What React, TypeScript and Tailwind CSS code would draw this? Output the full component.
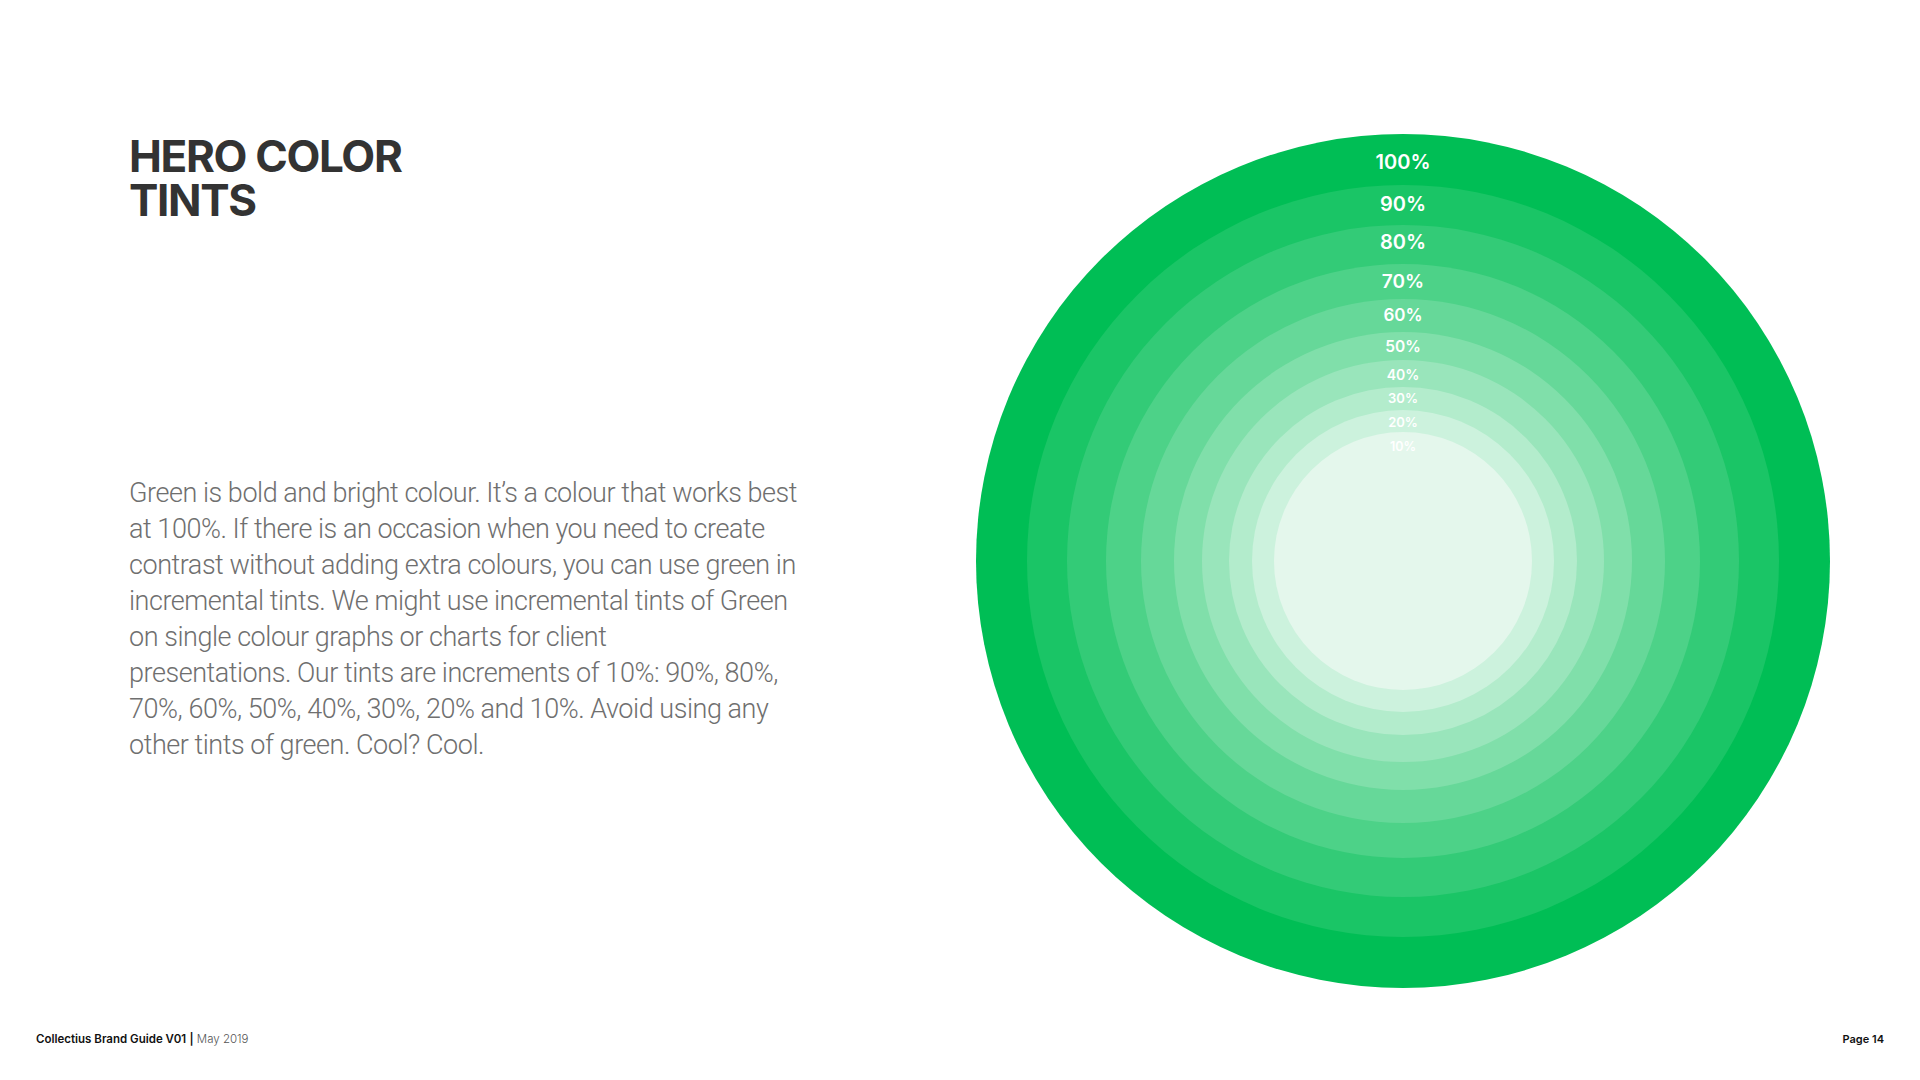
const tints = [
  { label: "100%", r: 427, fill: "#00BE55", y: 28, size: 20 },
  { label: "90%", r: 376, fill: "#1AC566", y: 70, size: 20 },
  { label: "80%", r: 336, fill: "#33CB77", y: 108, size: 20 },
  { label: "70%", r: 297, fill: "#4DD288", y: 147, size: 19 },
  { label: "60%", r: 262, fill: "#66D899", y: 181, size: 17 },
  { label: "50%", r: 229, fill: "#80DFAA", y: 212, size: 15.5 },
  { label: "40%", r: 201, fill: "#99E5BB", y: 240, size: 14 },
  { label: "30%", r: 174, fill: "#B3ECCC", y: 264, size: 13 },
  { label: "20%", r: 151, fill: "#CCF2DD", y: 288, size: 13 },
  { label: "10%", r: 129, fill: "#E4F7EC", y: 312, size: 12.5 },
];

function TintChart() {
  return (
    <svg width="854" height="854" viewBox="0 0 854 854" className="shrink-0">
      {tints.map((t) => (
        <circle key={t.label} cx="427" cy="427" r={t.r} fill={t.fill} />
      ))}
      {tints.map((t) => (
        <text
          key={t.label + "-t"}
          x="427"
          y={t.y}
          textAnchor="middle"
          dominantBaseline="central"
          fill="#ffffff"
          fontFamily="Inter, sans-serif"
          fontWeight={600}
          fontSize={t.size}
        >
          {t.label}
        </text>
      ))}
    </svg>
  );
}

export default function App() {
  return (
    <main className="w-[1920px] h-[1080px] bg-white flex flex-col overflow-hidden font-['Inter',sans-serif]">
      <section className="flex-1 flex pt-[134px]">
        {/* Left: title and copy */}
        <div className="pl-[129px] flex-1">
          <h1 className="text-[44px] leading-[44px] font-bold tracking-[-0.03em] text-[#333333]">
            <span className="block">HERO COLOR</span>
            <span className="block">TINTS</span>
          </h1>
          <p className="mt-[253px] font-['Roboto',sans-serif] font-light text-[27px] leading-[36px] text-[#6f6f6f] tracking-[-0.017em] whitespace-nowrap">
            Green is bold and bright colour. It’s a colour that works best
            <br />
            at 100%. If there is an occasion when you need to create
            <br />
            contrast without adding extra colours, you can use green in
            <br />
            incremental tints. We might use incremental tints of Green
            <br />
            on single colour graphs or charts for client
            <br />
            presentations. Our tints are increments of 10%: 90%, 80%,
            <br />
            70%, 60%, 50%, 40%, 30%, 20% and 10%. Avoid using any
            <br />
            other tints of green. Cool? Cool.
          </p>
        </div>

        {/* Right: tint rings */}
        <div className="mr-[90px]">
          <TintChart />
        </div>
      </section>

      <footer className="flex items-center justify-between px-[36px] pb-[33px] leading-[16px]">
        <p className="text-[11.5px] text-[#111111]">
          <span className="font-semibold">Collectius Brand Guide V01</span>{" "}
          <span className="font-semibold">|</span>{" "}
          <span className="font-light text-[#555555]">May 2019</span>
        </p>
        <p className="text-[11px] font-semibold text-[#111111]">Page 14</p>
      </footer>
    </main>
  );
}
